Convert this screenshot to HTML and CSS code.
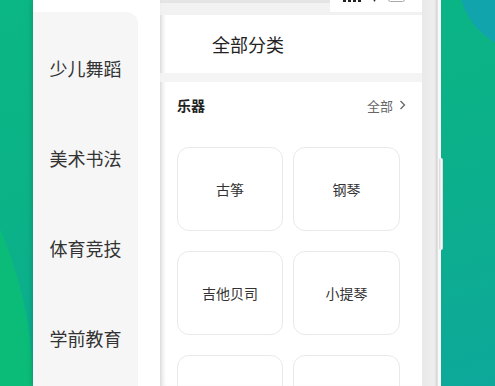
FILE: index.html
```html
<!DOCTYPE html>
<html lang="zh-CN">
<head>
    <meta charset="UTF-8">
    <meta name="viewport" content="width=device-width, initial-scale=1.0">
    <title>全部分类</title>
    <link rel="stylesheet" href="styles.css">
</head>
<body>
    <div class="stage">
        <!-- 左侧分类菜单 -->
        <aside class="menu">
            <ul class="menu-list">
                <li>少儿舞蹈</li>
                <li>美术书法</li>
                <li>体育竞技</li>
                <li>学前教育</li>
            </ul>
        </aside>

        <!-- 手机屏幕 -->
        <div class="phone">
            <div class="screen">
                <div class="status">
                    <div class="status-left"></div>
                    <div class="status-right">
                        <svg class="ic-signal" width="18" height="9" viewBox="0 0 18 9">
                            <rect x="0" y="5" width="3" height="4" fill="#222"/>
                            <rect x="5" y="3" width="3" height="6" fill="#222"/>
                            <rect x="10" y="1" width="3" height="8" fill="#222"/>
                            <rect x="15" y="0" width="3" height="9" fill="#222"/>
                        </svg>
                        <svg class="ic-wifi" width="7" height="9" viewBox="0 0 7 9">
                            <path d="M0 3 L3.5 9 L7 3 Z" fill="#333"/>
                        </svg>
                        <svg class="ic-battery" width="19" height="9" viewBox="0 0 19 9">
                            <rect x="0.5" y="0.5" width="16" height="8" rx="2" fill="none" stroke="#aaa"/>
                            <rect x="2" y="2" width="12" height="5" fill="#bbb"/>
                            <rect x="17" y="3" width="2" height="3" fill="#aaa"/>
                        </svg>
                    </div>
                </div>

                <header class="title-bar">全部分类</header>

                <section class="group">
                    <div class="group-head">
                        <span class="group-name">乐器</span>
                        <a href="#" class="group-more">全部
                            <svg width="7" height="10" viewBox="0 0 7 10">
                                <path d="M1.5 1 L5.5 5 L1.5 9" fill="none" stroke="#666" stroke-width="1.3"/>
                            </svg>
                        </a>
                    </div>
                    <div class="grid">
                        <div class="cell">古筝</div>
                        <div class="cell">钢琴</div>
                        <div class="cell">吉他贝司</div>
                        <div class="cell">小提琴</div>
                        <div class="cell"></div>
                        <div class="cell"></div>
                    </div>
                </section>
            </div>
            <div class="bezel"></div>
            <span class="side-key"></span>
        </div>
    </div>
</body>
</html>
```

FILE: styles.css
```css
/* 背景 */
html, body {
    margin: 0;
    padding: 0;
    height: 386px;
    overflow: hidden;
    font-family: "Noto Sans CJK SC", "Noto Sans", sans-serif;
}

body {
    background:
        radial-gradient(circle at 530px -20px, #12a4ad 71px, transparent 72px),
        radial-gradient(circle at -357px 385px, #0bbc78 389px, transparent 390px),
        linear-gradient(165deg, #0bb784 0%, #0bb286 40%, #0da89a 100%);
}

.stage {
    display: flex;
    align-items: flex-start;
    padding-left: 33px;
    height: 386px;
    overflow: hidden;
}

/* 左侧菜单 */
.menu {
    width: 127px;
    height: 386px;
    flex: 0 0 127px;
    background: #fff;
    padding-top: 12px;
    box-sizing: border-box;
    box-shadow: -2px 0 4px rgba(0, 0, 0, 0.12);
    position: relative;
    z-index: 2;
}

.menu-list {
    list-style: none;
    margin: 0;
    padding: 11px 0 0;
    width: 105px;
    height: 100%;
    box-sizing: border-box;
    background: #f6f6f6;
    border-top-right-radius: 12px;
}

.menu-list li {
    height: 90px;
    line-height: 90px;
    text-align: center;
    font-size: 18px;
    color: #333;
}

/* 手机 */
.phone {
    position: relative;
    display: flex;
    margin-top: -30px;
    height: 416px;
}

.screen {
    width: 262px;
    padding-top: 30px;
    overflow: hidden;
    background: #fff;
    box-shadow: inset 5px 0 5px -3px rgba(0, 0, 0, 0.16);
}

.bezel {
    width: 19px;
    border-top-right-radius: 40px;
    background: linear-gradient(to right, #e9e9e9 0, #eeeeee 12px, #e2e2e2 14px, #cdcdcd 15px, #f6f6f6 16px, #ffffff 19px);
}

.side-key {
    position: absolute;
    right: -2px;
    top: 188px;
    width: 4px;
    height: 92px;
    border-radius: 2px;
    background: linear-gradient(to right, #d6d6d6, #fafafa 60%, #cfcfcf);
}

/* 状态栏 */
.status {
    display: flex;
    height: 15px;
}

.status-left {
    width: 170px;
    background: linear-gradient(#e5e5e5 3px, #f2f2f2 3px);
}

.status-right {
    flex: 1;
    display: flex;
    align-items: flex-start;
    gap: 10px;
    padding-left: 13px;
    overflow: hidden;
    background: linear-gradient(#fff 12px, #f1f1f1 12px);
}

.status-right svg {
    display: block;
    flex: none;
    margin-top: -7px;
}

/* 标题栏 */
.title-bar {
    height: 58px;
    line-height: 58px;
    padding-left: 52px;
    font-size: 18px;
    color: #222;
    border-bottom: 9px solid #f4f4f4;
}

/* 分组 */
.group {
    padding: 0 16px 0 17px;
}

.group-head {
    display: flex;
    justify-content: space-between;
    align-items: center;
    height: 46px;
}

.group-name {
    font-size: 14px;
    font-weight: bold;
    color: #222;
}

.group-more {
    display: flex;
    align-items: center;
    gap: 6px;
    font-size: 13px;
    color: #666;
    text-decoration: none;
}

.group-more svg {
    display: block;
}

.grid {
    display: grid;
    grid-template-columns: 106px 107px;
    grid-auto-rows: 84px;
    column-gap: 10px;
    row-gap: 20px;
    margin-top: 19px;
}

.cell {
    display: flex;
    align-items: center;
    justify-content: center;
    border: 1px solid #e9e9e9;
    border-radius: 12px;
    font-size: 14px;
    color: #333;
}
```
